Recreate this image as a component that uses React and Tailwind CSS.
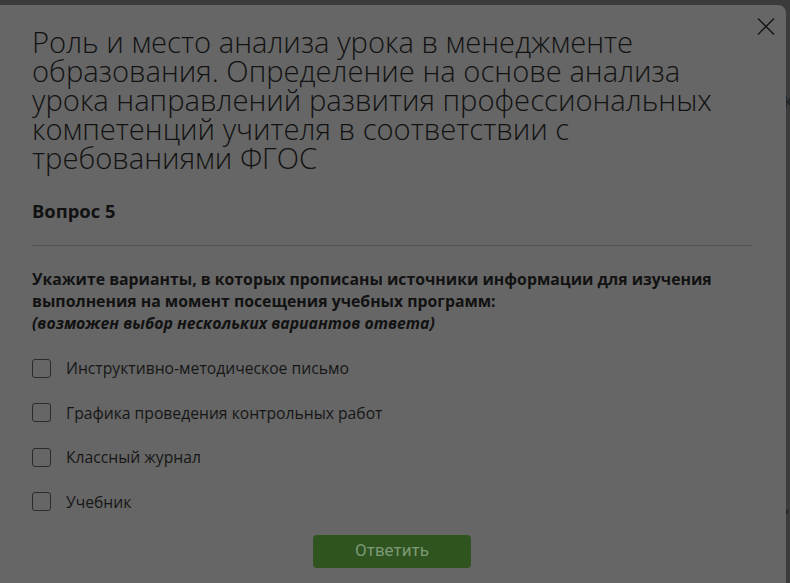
import React from "react";

const options = [
  "Инструктивно-методическое письмо",
  "Графика проведения контрольных работ",
  "Классный журнал",
  "Учебник",
];

export default function App() {
  return (
    <div
      className="relative w-[790px] h-[583px] overflow-hidden bg-[#3b3b3b]"
      style={{ fontFamily: '"Open Sans", "Noto Sans", sans-serif' }}
    >
      <div className="absolute left-[783px] top-[88px] text-[22px] text-[#1e1e1e] leading-none">к</div>
      <div className="absolute left-[783px] top-[500px] text-[20px] text-[#1e1e1e] leading-none">›</div>
      <div className="relative mt-[5px] w-[786px] h-[578px] bg-[#666666] rounded-tr-[8px] pl-[32px] pr-[34px] pt-[23px] text-[#121212]">
        <button className="absolute right-[8px] top-[9px] w-[24px] h-[24px] flex items-center justify-center">
          <svg width="18" height="17" viewBox="0 0 18 17">
            <path d="M1 0.5 L17 16.5 M17 0.5 L1 16.5" stroke="#151515" strokeWidth="1.4" fill="none" />
          </svg>
        </button>
        <h1 className="text-[29.2px] font-light leading-[29px] pr-[20px]">
          Роль и место анализа урока в менеджменте образования. Определение на основе анализа урока направлений развития профессиональных компетенций учителя в соответствии с требованиями ФГОС
        </h1>
        <div className="mt-[26px] text-[18.4px] font-bold leading-[24px]">Вопрос 5</div>
        <div className="mt-[22px] h-px bg-[#535353]"></div>
        <div className="mt-[22px] text-[15.8px] font-bold leading-[22px]">
          <div>Укажите варианты, в которых прописаны источники информации для изучения выполнения на момент посещения учебных программ:</div>
          <div className="italic">(возможен выбор нескольких вариантов ответа)</div>
        </div>
        <div className="mt-[23px] flex flex-col gap-[22.5px]">
          {options.map((o) => (
            <label key={o} className="flex items-center h-[22px]">
              <span className="w-[19px] h-[19px] border border-[#2c2c2c] rounded-[3px] shrink-0"></span>
              <span className="ml-[15px] text-[15.7px] leading-[22px] text-[#161616]">{o}</span>
            </label>
          ))}
        </div>
        <div className="mt-[22px] flex justify-center">
          <button
            className="w-[158px] h-[33px] rounded-[4px] bg-[#2f5420] text-[#7d9975] text-[17px]"
            style={{ fontFamily: 'Roboto, "Liberation Sans", sans-serif' }}
          >
            Ответить
          </button>
        </div>
      </div>
    </div>
  );
}
